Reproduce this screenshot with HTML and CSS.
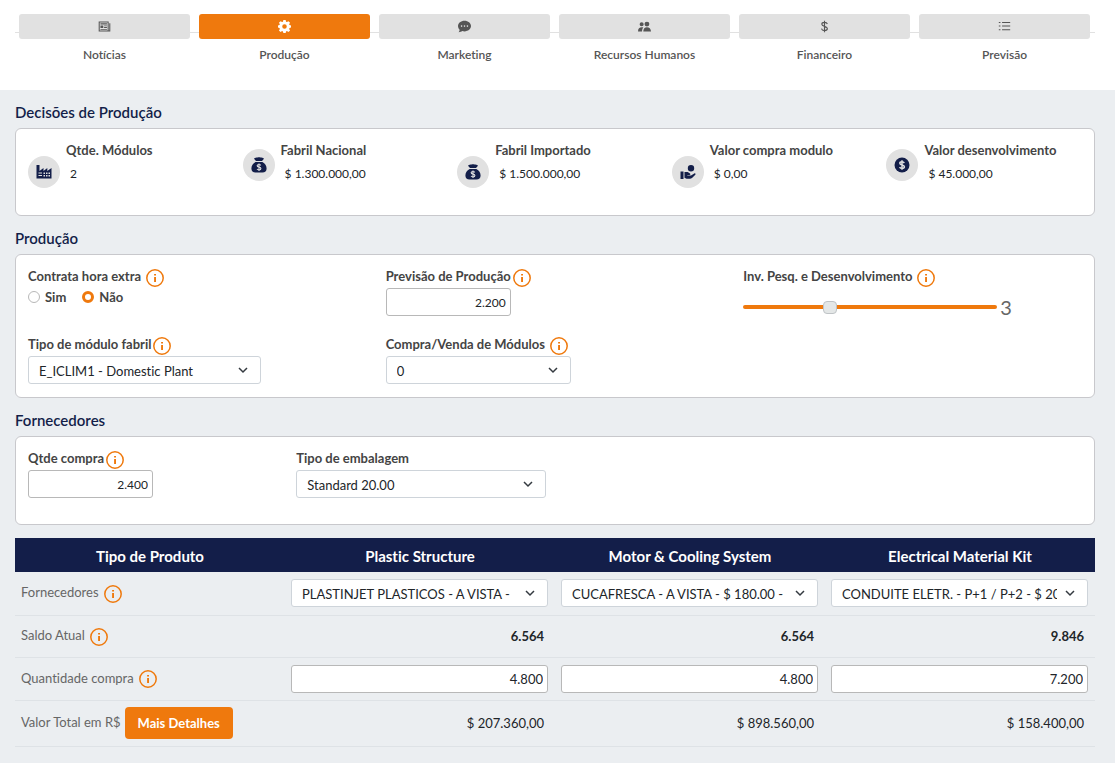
FILE: index.html
```html
<!DOCTYPE html>
<html lang="pt-BR">
<head>
<meta charset="utf-8">
<meta name="viewport" content="width=device-width, initial-scale=1">
<title>Decisões de Produção</title>
<link rel="stylesheet" href="styles.css">
</head>
<body>
<svg class="sprite" aria-hidden="true">
  <symbol id="info" viewBox="0 0 18 18"><circle cx="9" cy="9" r="8.2" fill="none" stroke="currentColor" stroke-width="1.5"/><path d="M8.1 5h1.9v1.6H8.1zM8.1 8h1.9v5H8.1z" fill="currentColor"/></symbol>
  <symbol id="bag" viewBox="0 0 16 16"><path d="M3 1.800C4 .3 5.500.9 6.500.6c1-.4 2-.4 3 0 1 .3 2.500-.2 3.500 1.200L11 4H5L3 1.800zM4.600 5h6.800c2.700 1.600 4.200 3.900 4.200 6.500 0 2.700-1.500 4-4.200 4H4.600c-2.700 0-4.200-1.300-4.200-4C.4 8.900 1.900 6.600 4.600 5z" fill="currentColor"/><path d="M9.800 8.300C9.300 7.700 8.700 7.500 8 7.500c-1.100 0-1.800.5-1.800 1.300 0 1.900 3.700.8 3.700 2.700 0 .9-.8 1.400-1.900 1.400-.8 0-1.500-.3-2-.9M8 6.500v7.400" fill="none" stroke="#e1e1e1" stroke-width="1.100"/></symbol>
</svg>
<header class="topbar">
  <nav class="steps" aria-label="Etapas">
    <a class="step" href="#noticias"><span class="step-bar"><svg viewBox="0 0 16 16"><path d="M1.500 2.500h11v11h-11zM14.500 4v9.500h-2" fill="none" stroke="currentColor" stroke-width="1.300"/><path d="M3 4h8v1.500H3zM3 6.700h3.500v3H3zM7.500 6.700H11v1H7.500zM7.500 8.700H11v1H7.500zM3 11h8v1H3z" fill="currentColor"/></svg></span><span>Notícias</span></a>
    <a class="step active" href="#producao" aria-current="step"><span class="step-bar"><svg viewBox="0 0 16 16"><path fill="currentColor" fill-rule="evenodd" d="M6.600 0h2.800l.5 2.100 1.100.5L12.900 1.400l1.900 1.900-1.100 1.800.5 1.100 1.800.5v2.600l-1.800.5-.5 1.200 1.100 1.800-1.900 1.900-1.900-1.200-1.100.5L9.400 16H6.600l-.5-2-1.100-.5-1.900 1.200-1.900-1.900L2.300 11l-.5-1.200L0 9.300V6.700l1.800-.5.5-1.100-1.100-1.800 1.900-1.900L5 2.600l1.100-.5L6.600 0zM8 5.200a2.800 2.800 0 1 0 0 5.600 2.800 2.800 0 0 0 0-5.600z"/></svg></span><span>Produção</span></a>
    <a class="step" href="#marketing"><span class="step-bar"><svg viewBox="0 0 16 16"><path fill="currentColor" fill-rule="evenodd" d="M8 1c4.400 0 8 2.900 8 6.500S12.400 14 8 14c-1 0-1.900-.1-2.800-.4-1 .8-2.500 1.400-4.400 1.400.8-.9 1.200-2 1.200-2.900C.8 10.900 0 9.300 0 7.500 0 3.900 3.600 1 8 1zM4.400 6.500a1 1 0 1 0 0 2 1 1 0 0 0 0-2zM8 6.500a1 1 0 1 0 0 2 1 1 0 0 0 0-2zM11.600 6.500a1 1 0 1 0 0 2 1 1 0 0 0 0-2z"/></svg></span><span>Marketing</span></a>
    <a class="step" href="#rh"><span class="step-bar"><svg viewBox="0 0 16 16"><path fill="currentColor" d="M11 2a3 3 0 1 1 0 6 3 3 0 0 1 0-6zM4.500 2.700a2.500 2.500 0 1 1 0 5 2.500 2.500 0 0 1 0-5zM6.500 14c0-3 1.800-5 4.500-5s5 2 5 5H6.500zM0 14c0-3.500 1.800-5.200 4.500-5.200.8 0 1.500.1 2.100.5C5.500 10.500 5 12 5 14H0z"/></svg></span><span>Recursos Humanos</span></a>
    <a class="step" href="#financeiro"><span class="step-bar"><svg viewBox="0 0 16 16"><path d="M11.500 5C11 3.600 9.700 3 8 3 6 3 4.700 4 4.700 5.300c0 3.200 6.800 1.900 6.800 5.200C11.500 12 10 13 8 13s-3.300-.8-3.700-2.500M8 1v14" fill="none" stroke="currentColor" stroke-width="1.400"/></svg></span><span>Financeiro</span></a>
    <a class="step" href="#previsao"><span class="step-bar"><svg viewBox="0 0 16 16"><path d="M5 3h10M5 7.500h10M5 12h10M1 3h2M1 7.500h2M1 12h2" stroke="currentColor" stroke-width="1.300"/></svg></span><span>Previsão</span></a>
  </nav>
</header>
<main class="content">
  <h2 class="title">Decisões de Produção</h2>
  <section class="card stats">
    <div class="stat"><span class="disc"><svg viewBox="0 0 16 16"><path fill="currentColor" fill-rule="evenodd" d="M.5 1h3v6L7.500 4v3l3.800-3v3L15.500 4v10.500H.5zM2.500 8.500v1H6v-1zM2.500 11v1H6v-1zM7.500 8.500V10H9V8.500zM10 8.500V10h1.500V8.500zM12.500 8.500V10H14V8.500zM7.500 11v1.500H9V11zM10 11v1.500h1.500V11zM12.500 11v1.500H14V11z"/></svg></span><div><h3>Qtde. Módulos</h3><p>2</p></div></div>
    <div class="stat raised"><span class="disc"><svg><use href="#bag"/></svg></span><div><h3>Fabril Nacional</h3><p>$ 1.300.000,00</p></div></div>
    <div class="stat"><span class="disc"><svg><use href="#bag"/></svg></span><div><h3>Fabril Importado</h3><p>$ 1.500.000,00</p></div></div>
    <div class="stat"><span class="disc"><svg viewBox="0 0 16 16"><path fill="currentColor" d="M11 1a3.200 3.200 0 1 1 0 6.400A3.200 3.200 0 0 1 11 1zM.5 7.500h3V15h-3zM4.500 8h3.200l2.300 1.500c.7.500.4 1.500-.5 1.500H7.300v.6H11l3.300-2.200c1-.5 1.700.5 1 1.300L12 14c-.7.600-1.300.8-2 .8H6.500l-2-1z"/></svg></span><div><h3>Valor compra modulo</h3><p>$ 0,00</p></div></div>
    <div class="stat raised"><span class="disc"><svg viewBox="0 0 16 16"><circle cx="8" cy="8" r="7.500" fill="currentColor"/><path d="M10.300 6C9.800 5.200 9 4.800 8 4.800c-1.300 0-2.200.6-2.200 1.500 0 2.200 4.600 1.100 4.600 3.400 0 1-1 1.600-2.400 1.600-1 0-1.900-.4-2.400-1.200M8 3.200v9.600" fill="none" stroke="#e1e1e1" stroke-width="1.500"/></svg></span><div><h3>Valor desenvolvimento</h3><p>$ 45.000,00</p></div></div>
  </section>

  <h2 class="title">Produção</h2>
  <section class="card fields thirds">
    <fieldset class="field">
      <legend class="label spaced">Contrata hora extra<svg class="info"><use href="#info"/></svg></legend>
      <div class="radios"><label><input type="radio" name="extra">Sim</label><label><input type="radio" name="extra" checked>Não</label></div>
    </fieldset>
    <div class="field"><label class="label" for="producao-prevista">Previsão de Produção<svg class="info"><use href="#info"/></svg></label><input class="number short" id="producao-prevista" type="text" value="2.200"></div>
    <div class="field"><label class="label spaced" for="inv">Inv. Pesq. e Desenvolvimento<svg class="info"><use href="#info"/></svg></label>
      <div class="slider"><input id="inv" type="range" min="0" max="9" value="3"><output for="inv">3</output></div></div>
    <div class="field"><label class="label" for="tipo">Tipo de módulo fabril<svg class="info"><use href="#info"/></svg></label><select class="select plant" id="tipo"><option>E_ICLIM1 - Domestic Plant</option></select></div>
    <div class="field"><label class="label spaced" for="modulos">Compra/Venda de Módulos<svg class="info"><use href="#info"/></svg></label><select class="select modules" id="modulos"><option>0</option></select></div>
  </section>

  <h2 class="title">Fornecedores</h2>
  <section class="card fields quarters">
    <div class="field"><label class="label" for="qtde">Qtde compra<svg class="info"><use href="#info"/></svg></label><input class="number short" id="qtde" type="text" value="2.400"></div>
    <div class="field"><label class="label" for="embalagem">Tipo de embalagem</label><select class="select" id="embalagem"><option>Standard 20.00</option></select></div>
  </section>

  <table class="products">
    <thead><tr><th scope="col">Tipo de Produto</th><th scope="col">Plastic Structure</th><th scope="col">Motor &amp; Cooling System</th><th scope="col">Electrical Material Kit</th></tr></thead>
    <tbody>
      <tr><th scope="row"><span class="row-label">Fornecedores<svg class="info"><use href="#info"/></svg></span></th>
        <td><select class="select" aria-label="Fornecedor Plastic Structure"><option>PLASTINJET PLASTICOS - A VISTA -</option></select></td>
        <td><select class="select" aria-label="Fornecedor Motor &amp; Cooling System"><option>CUCAFRESCA - A VISTA - $ 180.00 -</option></select></td>
        <td><select class="select" aria-label="Fornecedor Electrical Material Kit"><option>CONDUITE ELETR. - P+1 / P+2 - $ 20</option></select></td></tr>
      <tr class="balance"><th scope="row"><span class="row-label">Saldo Atual<svg class="info"><use href="#info"/></svg></span></th><td class="value strong">6.564</td><td class="value strong">6.564</td><td class="value strong">9.846</td></tr>
      <tr><th scope="row"><span class="row-label">Quantidade compra<svg class="info"><use href="#info"/></svg></span></th>
        <td><input class="number" type="text" value="4.800" aria-label="Quantidade Plastic Structure"></td>
        <td><input class="number" type="text" value="4.800" aria-label="Quantidade Motor &amp; Cooling System"></td>
        <td><input class="number" type="text" value="7.200" aria-label="Quantidade Electrical Material Kit"></td></tr>
      <tr class="total"><th scope="row"><span class="row-label">Valor Total em R$<button class="button" type="button">Mais Detalhes</button></span></th><td class="value">$ 207.360,00</td><td class="value">$ 898.560,00</td><td class="value">$ 158.400,00</td></tr>
    </tbody>
  </table>
</main>
</body>
</html>
```
FILE: styles.css
```css
:root {
  --orange: #ef790d;
  --navy: #131e49;
  --page: #ebeef1;
  --gray: #e1e1e1;
}

* { box-sizing: border-box; }

body {
  margin: 0;
  background: var(--page);
  color: #212529;
  font: 13px/20px Lato, "Open Sans", sans-serif;
  font-variant-ligatures: none;
}

h2, h3, p, fieldset, legend { margin: 0; padding: 0; border: 0; }

input, select, button { font: inherit; color: inherit; margin: 0; }

.sprite { position: absolute; width: 0; height: 0; }

.topbar {
  background: #fff;
  padding: 14px 20px 25px 15px;
}

.steps {
  display: grid;
  grid-template-columns: repeat(6, 1fr);
  gap: 9px;
  padding: 0 5px 0 4px;
  background: linear-gradient(var(--gray), var(--gray)) 0 18px / 100% 1px no-repeat;
}

.step {
  display: flex;
  flex-direction: column;
  gap: 6px;
  color: #555;
  font-size: 12px;
  font-weight: 600;
  text-align: center;
  text-decoration: none;
}

.step-bar {
  display: flex;
  align-items: center;
  justify-content: center;
  height: 25px;
  padding-bottom: 1px;
  border-radius: 3px;
  background: var(--gray);
}

.step-bar svg { width: 13px; height: 13px; }
.active .step-bar { background: var(--orange); color: #fff; }

.content { padding: 13px 20px 16px 15px; }

.title {
  margin-bottom: 7px;
  color: var(--navy);
  font-size: 15px;
  font-weight: 600;
  line-height: 18px;
}

.card {
  display: grid;
  column-gap: 19px;
  margin-bottom: 13px;
  padding: 12px;
  background: #fff;
  border: 1px solid #c8c8cc;
  border-radius: 6px;
}

.stats { grid-template-columns: repeat(5, 1fr); padding-bottom: 31px; }

.stat { display: flex; gap: 6px; }
.stat h3 { font-size: 13px; font-weight: 700; color: #444; line-height: 18px; white-space: nowrap; }
.stat p { margin-top: 5px; padding-left: 4px; font-size: 12px; line-height: 20px; }

.disc {
  display: flex;
  flex: none;
  align-items: center;
  justify-content: center;
  align-self: flex-end;
  width: 32px;
  height: 32px;
  margin-bottom: -4px;
  border-radius: 50%;
  background: var(--gray);
  color: var(--navy);
}

.disc svg { width: 16px; height: 16px; }
.raised .disc { align-self: center; margin: 4px 0 0; }

.thirds { grid-template-columns: repeat(3, 1fr); row-gap: 9px; padding-bottom: 13px; }
.quarters { grid-template-columns: repeat(4, 1fr); padding-bottom: 26px; }

.label {
  display: flex;
  align-items: center;
  height: 21px;
  padding-bottom: 3px;
  color: #444;
  font-weight: 700;
  white-space: nowrap;
}

.field { display: flex; flex-direction: column; align-items: flex-start; min-width: 0; }
fieldset.field { display: block; }
.info { flex: none; width: 18px; height: 18px; margin: 3px 0 0 2px; color: var(--orange); }
.spaced .info { margin-left: 5px; }

.radios { display: flex; gap: 16px; color: #444; font-weight: 700; line-height: 18px; }
.radios label { display: flex; align-items: center; gap: 5px; }
.radios input {
  appearance: none;
  width: 12px;
  height: 12px;
  border: 1px solid #b8b8b8;
  border-radius: 50%;
  background: #fff;
}
.radios input:checked { border: 3px solid var(--orange); }

.number, .select {
  width: 100%;
  height: 28px;
  border: 1px solid #b8b8b8;
  border-radius: 3px;
  background-color: #fff;
}

.number { padding: 0 4px; text-align: right; }
.short { width: 125px; font-size: 12px; }

.select {
  appearance: none;
  padding: 1px 30px 0 10px;
  border-color: #ced4da;
  background-image: url("data:image/svg+xml,%3Csvg xmlns='http://www.w3.org/2000/svg' viewBox='0 0 12 12'%3E%3Cpath d='M2 4l4 4 4-4' fill='none' stroke='%23343a40' stroke-width='1.5'/%3E%3C/svg%3E");
  background-repeat: no-repeat;
  background-position: right 11px center;
  background-size: 12px 12px;
}

.plant { width: 233px; }
.modules { width: 185px; }

.slider { display: flex; align-items: center; gap: 3px; height: 38px; }
.slider input {
  appearance: none;
  width: 254px;
  height: 4px;
  border-radius: 2px;
  background: var(--orange);
}
.slider input::-webkit-slider-thumb {
  appearance: none;
  width: 14px;
  height: 13px;
  border: 1px solid #bfc3c6;
  border-radius: 4px;
  background: #e4e7e7;
}
.slider output { color: #666; font-size: 20px; }

.products {
  width: 100%;
  table-layout: fixed;
  border-collapse: collapse;
}

.products thead th {
  height: 34px;
  padding: 2px 6px 0;
  background: var(--navy);
  color: #fff;
  font-size: 15px;
  font-weight: 700;
}

.products tbody tr { height: 43px; border-bottom: 1px solid #dee2e6; }
.products tbody .balance { height: 42px; }
.products tbody .total { height: 46px; }
.products tbody th { padding: 0 6px 2px; color: #666; font-weight: 400; text-align: left; }
.products td { padding: 0 7px 0 6px; }
.products .value { padding-right: 11px; text-align: right; }
.products .strong { font-weight: 700; }
.row-label { display: flex; align-items: center; white-space: nowrap; }
.row-label .info { margin-left: 5px; }

.button {
  height: 32px;
  margin: 2px 0 0 4px;
  padding: 0 13px;
  border: 0;
  border-radius: 4px;
  background: var(--orange);
  color: #fff;
  font-weight: 700;
}
```
